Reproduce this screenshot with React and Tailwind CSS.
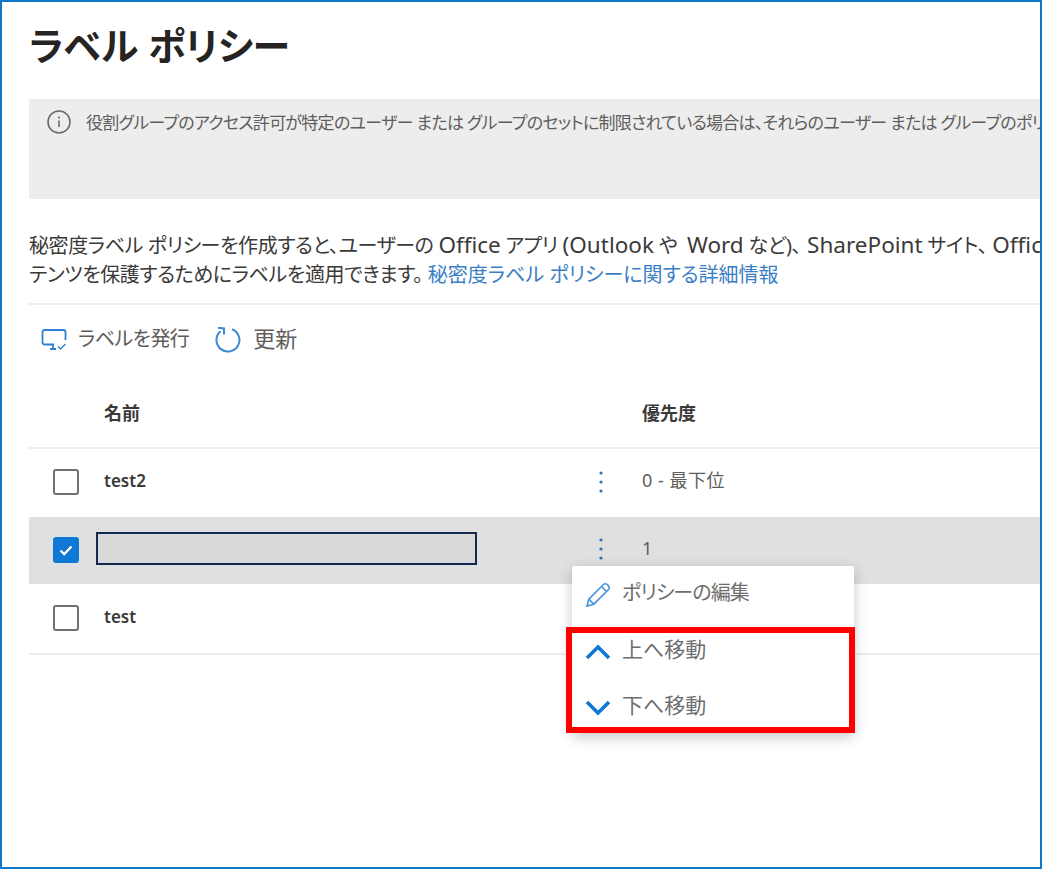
const FONT = "font-['Noto_Sans','Noto_Sans_CJK_JP',sans-serif] [font-feature-settings:'palt']";

function Check({ checked }) {
  if (checked) {
    return (
      <div className="w-[26px] h-[26px] shrink-0 rounded-[3px] bg-[#0f78d4] flex items-center justify-center">
        <svg width="16" height="16" viewBox="0 0 16 16" fill="none" stroke="#fff" strokeWidth="2.4">
          <path d="M2.5 8.5 L6.2 12 L13.5 4.5" />
        </svg>
      </div>
    );
  }
  return <div className="w-[26px] h-[26px] shrink-0 rounded-[3px] border-2 border-[#707070] bg-white" />;
}

function Dots() {
  return (
    <svg width="6" height="22" viewBox="0 0 6 22" fill="#2f6fc0" className="shrink-0 block">
      <circle cx="3" cy="2" r="1.6" />
      <circle cx="3" cy="11" r="1.6" />
      <circle cx="3" cy="20" r="1.6" />
    </svg>
  );
}

function Row({ checked, name, priority, className, redact, textPad }) {
  return (
    <div className={"flex items-center " + className}>
      <div className="w-[75px] pl-[24px] pb-[2px] shrink-0 flex">
        <Check checked={checked} />
      </div>
      <div className={"w-[493px] shrink-0 flex items-center " + textPad}>
        {redact ? (
          <div className="w-[381px] h-[33px] -ml-[8px] bg-[#d9d9d9] border-[2px] border-[#14294f]" />
        ) : (
          <span className="text-[17px] font-semibold text-[#3b3a39]">{name}</span>
        )}
      </div>
      <div className="w-[45px] shrink-0 pl-[1px] pb-[3px]">{priority ? <Dots /> : null}</div>
      <span className={"text-[18px] tracking-[0.5px] text-[#605e5c] " + textPad}>{priority}</span>
    </div>
  );
}

function MenuItem({ icon, label, className, labelClass }) {
  return (
    <div className={"flex items-center h-[56px] pl-[12px] gap-[11px] " + className}>
      <div className="w-[27px] flex justify-center shrink-0">{icon}</div>
      <span className={"text-[#6e6e6e] pb-[4px] " + labelClass}>{label}</span>
    </div>
  );
}

function Latin({ children, className = "" }) {
  return <span className={"text-[22.5px] leading-none tracking-[0px] " + className}>{children}</span>;
}

export default function App() {
  return (
    <div className={"w-[1042px] h-[869px] bg-white border-2 border-[#0f78c8] overflow-hidden relative whitespace-nowrap " + FONT}>
      <div className="pl-[27px] pt-[14px]">
        <h1 className="text-[38px] leading-[58px] font-bold text-[#252423]">ラベル ポリシー</h1>

        <div className="mt-[25px] h-[100px] bg-[#ededed] pl-[17px] pt-[11px] flex items-start gap-[14px] text-[#5f5e5c]">
          <svg width="26" height="26" viewBox="0 0 26 26" fill="none" className="shrink-0">
            <circle cx="13" cy="12" r="11" stroke="#6d6a6e" strokeWidth="1.6" />
            <path d="M13 10.5v6.5" stroke="#6d6a6e" strokeWidth="1.6" />
            <circle cx="13" cy="7.5" r="1.1" fill="#6d6a6e" />
          </svg>
          <span className="text-[17px] tracking-[-0.72px] leading-[26px]">
            役割グループのアクセス許可が特定のユーザー または グループのセットに制限されている場合は、それらのユーザー または グループのポリシー
          </span>
        </div>

        <p className="mt-[32px] h-[58px] text-[20px] tracking-[-0.4px] leading-[29px] text-[#3b3a39]">
          秘密度ラベル ポリシーを作成すると、ユーザーの <Latin>Office</Latin> アプリ <Latin>(Outlook</Latin> や <Latin className="ml-[5px]">Word</Latin> など)、<Latin className="ml-[6px]">SharePoint</Latin> サイト、<Latin className="ml-[5px]">Office</Latin>
          <br />
          テンツを保護するためにラベルを適用できます。<span className="text-[#3a7fc4] tracking-[0px]"> 秘密度ラベル ポリシーに関する詳細情報</span>
        </p>

        <div className="mt-[14px] h-[2px] bg-[#eeeeee]" />

        <div className="h-[69px] flex items-center pl-[12px] text-[#5f5e5c]">
          <svg width="26" height="22" viewBox="0 0 26 22" fill="none" stroke="#2f80d0" strokeWidth="1.8" className="shrink-0">
            <path d="M13 15.5H3.5a2 2 0 0 1-2-2V3a2 2 0 0 1 2-2h19a2 2 0 0 1 2 2v8" />
            <path d="M9 20h6M12 15.5V20" />
            <path d="M17 17.5l2.5 2.5 5-5" strokeWidth="1.4" />
          </svg>
          <span className="ml-[11px] pb-[2px] text-[20px] tracking-[-0.6px]">ラベルを発行</span>
          <svg width="26" height="26" viewBox="0 0 26 26" fill="none" stroke="#3b8ad4" strokeWidth="2" className="ml-[26px] shrink-0">
            <path d="M17 2.3 A11.5 11.5 0 1 1 5.5 4.3" />
            <path d="M3 0.8 L9 1.4 L9 7.5" />
          </svg>
          <span className="ml-[12px] pb-[2px] text-[22px]">更新</span>
        </div>

        <div className="h-[75px] pt-[6px] flex items-center text-[18px] font-semibold text-[#3b3a39] border-b-2 border-[#eeeeee]">
          <span className="w-[613px] pl-[75px] shrink-0">名前</span>
          <span>優先度</span>
        </div>

        <Row name="test2" priority="0 - 最下位" className="h-[68px]" textPad="pb-[5px]" />
        <Row checked redact priority="1" className="h-[67px] bg-[#e0e0e0]" textPad="pb-[5px]" />
        <Row name="test" priority="" className="h-[71px] border-b-2 border-[#eeeeee]" textPad="pb-[3px]" />
      </div>

      <div className="absolute left-[570px] top-[564px] w-[282px] h-[167px] bg-white rounded-[2px] shadow-[0_4px_14px_rgba(0,0,0,0.22)] pt-[1px]">
        <MenuItem
          label="ポリシーの編集"
          labelClass="text-[20px] tracking-[-0.9px]"
          icon={
            <svg width="26" height="26" viewBox="0 0 26 26" fill="none" stroke="#4a96dc" strokeWidth="1.7">
              <path d="M2 24l1.8-6.8L18.5 2.5a2.6 2.6 0 0 1 3.7 0l1.3 1.3a2.6 2.6 0 0 1 0 3.7L8.8 22.2z" />
              <path d="M3.8 17.2l5 5M16.5 4.5l5 5" />
            </svg>
          }
        />
        <MenuItem
          label="上へ移動"
          labelClass="text-[21px]"
          className="mt-[1px]"
          icon={
            <svg width="26" height="16" viewBox="0 0 26 16" fill="none" stroke="#0f78d4" strokeWidth="3.6">
              <path d="M2 14 L13 3 L24 14" />
            </svg>
          }
        />
        <MenuItem
          label="下へ移動"
          labelClass="text-[21px]"
          icon={
            <svg width="26" height="16" viewBox="0 0 26 16" fill="none" stroke="#0f78d4" strokeWidth="3.6">
              <path d="M2 2 L13 13 L24 2" />
            </svg>
          }
        />
      </div>

      <div className="absolute left-[564px] top-[625px] w-[289px] h-[106px] border-[6px] border-[#ff0000]" />
    </div>
  );
}
